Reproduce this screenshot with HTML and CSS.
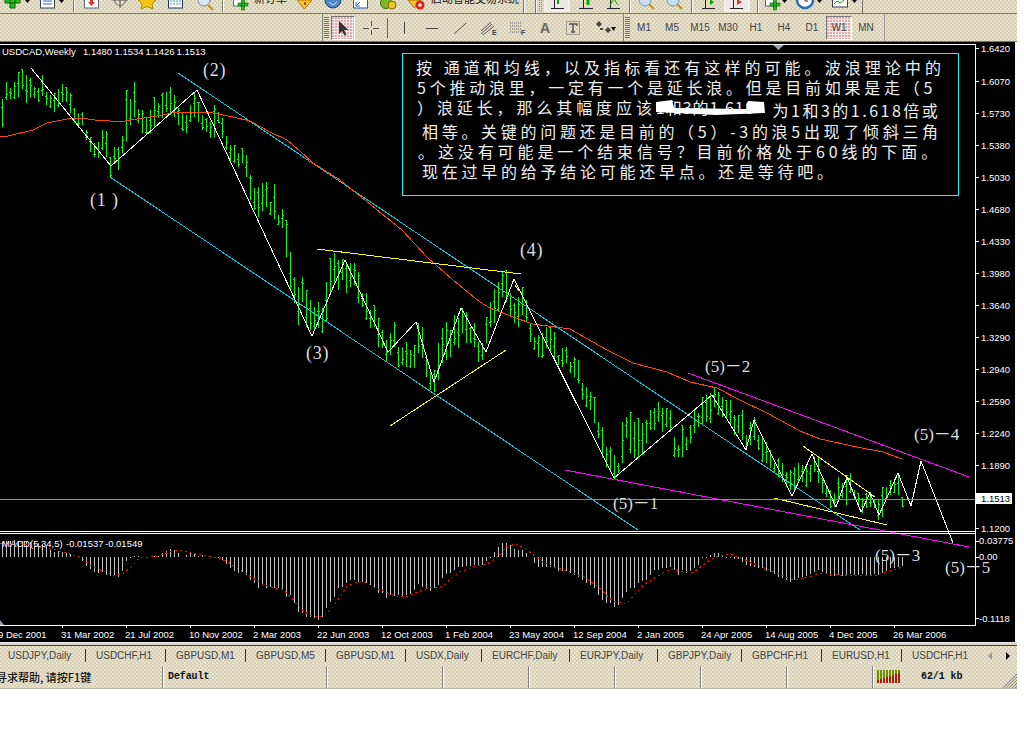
FILE: index.html
```html
<!DOCTYPE html>
<html lang="zh">
<head>
<meta charset="utf-8">
<title>USDCAD,Weekly</title>
<link rel="stylesheet" href="styles.css">
</head>
<body>
<div class="app">
  <div class="strip-top">
    <svg class="strip-svg" width="1017" height="13" viewBox="0 0 1017 13">
      <path d="M5 -1h15v4H5zM10 -6h5v14h-5z" fill="#22c022" stroke="#0a5a0a"/>
      <path d="M25 0h5l-2.500 3z" fill="#000"/>
      <rect x="40.500" y="-4" width="14" height="12" fill="#fff" stroke="#345"/><path d="M43 1h9M43 4h9" stroke="#36c"/>
      <path d="M59 0h5l-2.500 3z" fill="#000"/>
      <path d="M73.500 0v12" stroke="#777"/><path d="M74.500 0v12" stroke="#fff"/>
      <rect x="84.500" y="-4" width="14" height="12" fill="#fff" stroke="#567"/><path d="M90 0h3v2h2l-3.500 4L88 2h2z" fill="#d33"/>
      <circle cx="120" cy="0" r="5.500" fill="none" stroke="#666"/><path d="M112 0h16M120 -2v10" stroke="#555"/>
      <path d="M147 -6l3 5 6 1-4 4 1 5-6-2.500-6 2.500 1-5-4-4 6-1z" fill="#f5c518" stroke="#a80"/>
      <rect x="168.500" y="-4" width="14" height="12" fill="#fff" stroke="#236"/><path d="M170 1h11M170 4h11" stroke="#39c" stroke-dasharray="2 1"/>
      <circle cx="204" cy="0" r="6" fill="#d8e8f4" stroke="#789"/><path d="M208 5l5 5" stroke="#c09020" stroke-width="2"/>
      <path d="M222.500 0v12" stroke="#777"/><path d="M223.500 0v12" stroke="#fff"/>
      <rect x="233.500" y="-4" width="10" height="10" fill="#fff" stroke="#567"/><path d="M238 3h10v3h-10zM241.500 -1h3v11h-3z" fill="#22c022" stroke="#0a5a0a" stroke-width=".6"/>
      <text class="tb-label" x="254" y="3">新订单</text>
      <path d="M297 0h15l-7.500 9z" fill="#fcc633" stroke="#a70"/><path d="M304 2h2v3h-2z" fill="#a50"/>
      <circle cx="333" cy="0" r="8" fill="#4a86c8" stroke="#246"/><path d="M329 2l4 3 4-3" stroke="#cde" fill="none"/>
      <rect x="353.500" y="-4" width="14" height="12" fill="#fff" stroke="#35a"/><path d="M356 6l4-4M360 6h-4V2M363 -1l2 -1" stroke="#27c" fill="none"/>
      <circle cx="386" cy="3" r="5.500" fill="#7ab82a" stroke="#3b6a10"/><circle cx="392" cy="5" r="4" fill="#e8c820" stroke="#860"/>
      <path d="M408 0h13l-6.500 8z" fill="#f4c430" stroke="#a70"/><circle cx="420" cy="5" r="4.500" fill="#e02020"/><circle cx="420" cy="5" r="1.800" fill="#fff"/>
      <text class="tb-label" x="431" y="3">启动智能交易系统</text>
      <path d="M523.500 0v13M535.500 0v13" stroke="#777"/><path d="M524.500 0v13M536.500 0v13" stroke="#fff"/>
      <path d="M539.500 0v12M541.500 0v12" stroke="#888" stroke-dasharray="1 1"/>
      <rect x="545" y="-2" width="24" height="13" fill="#eee8e4" stroke="#fff"/>
      <path d="M551 8.500h13M554.500 -2v11" stroke="#222"/><path d="M558 -2v6" stroke="#0a0" stroke-width="2"/>
      <path d="M579 8.500h14M583.500 -2v11" stroke="#222"/><path d="M588 -1v6" stroke="#0a0" stroke-width="3"/>
      <path d="M607 8.500h13M610.500 -2v11" stroke="#222"/><path d="M610 5l4-6 4 6" stroke="#0a0" fill="none"/>
      <path d="M629.500 0v13" stroke="#777"/><path d="M630.500 0v13" stroke="#fff"/>
      <circle cx="645" cy="0" r="6" fill="#c8def0" stroke="#69c"/><path d="M649 4l5 5" stroke="#c09020" stroke-width="2"/>
      <circle cx="673" cy="0" r="6" fill="#c8def0" stroke="#69c"/><path d="M677 4l5 5" stroke="#c09020" stroke-width="2"/>
      <path d="M691.500 0v13" stroke="#777"/><path d="M692.500 0v13" stroke="#fff"/>
      <path d="M702 8.500h13M705.500 -2v11" stroke="#222"/><path d="M710 -1l4 3-4 3z" fill="#0a0"/>
      <rect x="725" y="-2" width="24" height="13" fill="#eee8e4" stroke="#fff"/>
      <path d="M730 8.500h13M733.500 -2v11" stroke="#222"/><path d="M737 -1l5 3-5 3z" fill="#d33"/>
      <path d="M757.500 0v13" stroke="#777"/><path d="M758.500 0v13" stroke="#fff"/>
      <rect x="765.500" y="-4" width="10" height="10" fill="#fff" stroke="#567"/><path d="M770 3h10v3h-10zM773.500 -1h3v11h-3z" fill="#22c022" stroke="#0a5a0a" stroke-width=".6"/>
      <path d="M782 0h5l-2.500 3z" fill="#000"/>
      <circle cx="805" cy="0" r="8" fill="#fff" stroke="#2b6cb0" stroke-width="2.500"/><path d="M805 -3v4h3" stroke="#333" fill="none"/>
      <path d="M817 0h5l-2.500 3z" fill="#000"/>
      <rect x="832.500" y="-4" width="15" height="11" fill="#fff" stroke="#345"/><path d="M834 4l3-3 3 2 4-3" stroke="#0a0" fill="none"/>
      <path d="M852 0h5l-2.500 3z" fill="#000"/>
      <path d="M862.500 0v13" stroke="#777"/>
    </svg>
  </div>
  <div class="toolbar">
    <div class="tb-spacer"></div>
    <div class="tb-group">
      <span class="grip"></span>
      <span class="btn active w24">
        <svg width="16" height="16" viewBox="0 0 16 16"><path d="M4 1v13l3-3 2.500 4.500 2-1L9 10h4.500z" fill="#333"/></svg>
      </span>
      <span class="btn w32">
        <svg width="16" height="16" viewBox="0 0 16 16"><path d="M0 8.500h6M10 8.500h6M8.500 1v5M8.500 10v5" stroke="#555"/></svg>
      </span>
      <span class="tb-sep"></span>
      <span class="btn w28"><svg width="16" height="16" viewBox="0 0 16 16"><path d="M8.500 2v12" stroke="#444"/></svg></span>
      <span class="btn w28"><svg width="16" height="16" viewBox="0 0 16 16"><path d="M2 8.500h12" stroke="#444"/></svg></span>
      <span class="btn w28"><svg width="16" height="16" viewBox="0 0 16 16"><path d="M2 14L14 3" stroke="#555"/></svg></span>
      <span class="btn w30"><svg width="18" height="16" viewBox="0 0 18 16"><path d="M1 11L11 2M1 14L12 4M3 15L14 6" stroke="#555"/><text class="ico-letter" x="12" y="15">E</text></svg></span>
      <span class="btn w28"><svg width="18" height="16" viewBox="0 0 18 16"><path d="M1 3h11M1 6h11M1 9h11M1 12h11" stroke="#666" stroke-dasharray="1 1"/><text class="ico-letter" x="12" y="15">F</text></svg></span>
      <span class="btn w26 btn-text big">A</span>
      <span class="btn w30"><svg width="14" height="16" viewBox="0 0 14 16"><rect x=".5" y="1.500" width="13" height="13" fill="none" stroke="#666" stroke-dasharray="1 1"/><path d="M3 4h8v2M7 4v8M5 12h4" stroke="#555" stroke-width="1.500" fill="none"/></svg></span>
      <span class="btn w34"><svg width="22" height="16" viewBox="0 0 22 16"><path d="M2 4l3-3 3 3-3 3zM6 8h3v2H6zM11 10l3-3 3 3-3 3z" fill="#444"/><path d="M17 7h5l-2.500 4z" fill="#111"/></svg></span>
    </div>
    <div class="tb-group tb-tf">
      <span class="grip"></span>
      <span class="btn w28 btn-text">M1</span>
      <span class="btn w28 btn-text">M5</span>
      <span class="btn w28 btn-text">M15</span>
      <span class="btn w28 btn-text">M30</span>
      <span class="btn w28 btn-text">H1</span>
      <span class="btn w28 btn-text">H4</span>
      <span class="btn w28 btn-text">D1</span>
      <span class="btn active w26 btn-text">W1</span>
      <span class="btn w28 btn-text">MN</span>
    </div>
  </div>
  <div class="tb-edge"></div>

  <div class="chart">
    <svg class="plot" width="1015" height="600" viewBox="0 42 1015 600">
      <path id="bars" class="l bars" d=""/>
      <!-- channel -->
      <path class="l cyan" d="M178 73L860 530M110 177L638 530"/>
      <!-- moving average -->
      <path class="l orange" d="M0 136L8 136 33 130 47 123 72 118 88 119 95 120 110 121 125 121 137 119 157 116 177 112 213 113 233 117 250 121 270 132 287 140 300 151 313 163 340 180 402 230 428 258 453 280 480 302 490 308 513 317 533 324 570 329 593 342 607 350 633 363 667 372 690 382 717 388 740 400 767 413 800 431 820 439 857 447 883 452 902 459"/>
      <!-- trend lines -->
      <path class="l yellow" d="M317 249L521 274M390 426L506 350M803 446L875 497M774 498L887 525M515 285L519 291"/>
      <path class="l magenta" d="M688 373L969 477M565 470L969 547"/>
      <!-- wave count -->
      <path class="l white" d="M31 68L111 166 197 90 312 336 345 260 388 352 416 322 434 382 461 308 486 352 514 279 614 478 712 395 746 450 754 420 792 496 812 454 836 507 847 477 861 512 870 493 879 515 898 473 911 506 921 461 953 543"/>
      <!-- price line and frame -->
      <path class="l grey" d="M0 499.500H975"/>
      <path class="l frame" d="M0 44.500H975.500V625.500H0M0 531.500H975M0 533.500H975"/>
      <path class="l frame" d="M976 48.500h3M976 81.500h3M976 113.500h3M976 145.500h3M976 177.500h3M976 209.500h3M976 241.500h3M976 273.500h3M976 305.500h3M976 337.500h3M976 369.500h3M976 401.500h3M976 433.500h3M976 465.500h3M976 528.500h3M976 541.500h3M976 557.500h3M976 618.500h3"/>
      <path class="l frame" d="M62.500 625v3M126.500 625v3M190.500 625v3M254.500 625v3M318.500 625v3M382.500 625v3M446.500 625v3M510.500 625v3M574.500 625v3M638.500 625v3M702.500 625v3M766.500 625v3M830.500 625v3M894.500 625v3"/>
      <path d="M773 45h11l-5.500 5z" fill="#9aa0b8"/>
      <path d="M0 620l4 5H0z" fill="#9aa0b8"/>

      <!-- MACD -->
      <path id="hist" class="l hist" d=""/>
      <path id="signal" class="l signal" d=""/>

      <!-- header text -->
      <text class="t" x="2" y="55">USDCAD,Weekly</text>
      <text class="t" x="83" y="55">1.1480</text>
      <text class="t" x="114.500" y="55">1.1534</text>
      <text class="t" x="145.500" y="55">1.1426</text>
      <text class="t" x="176.500" y="55">1.1513</text>
      <text class="t" x="2" y="547">MACD(5,34,5)</text>
      <text class="t" x="66" y="547">-0.01537</text>
      <text class="t" x="105" y="547">-0.01549</text>

      <!-- price axis -->
      <text class="t" x="981" y="52">1.6420</text>
      <text class="t" x="981" y="85">1.6070</text>
      <text class="t" x="981" y="117">1.5730</text>
      <text class="t" x="981" y="149">1.5380</text>
      <text class="t" x="981" y="181">1.5030</text>
      <text class="t" x="981" y="213">1.4680</text>
      <text class="t" x="981" y="245">1.4330</text>
      <text class="t" x="981" y="277">1.3980</text>
      <text class="t" x="981" y="309">1.3640</text>
      <text class="t" x="981" y="341">1.3290</text>
      <text class="t" x="981" y="373">1.2940</text>
      <text class="t" x="981" y="405">1.2590</text>
      <text class="t" x="981" y="437">1.2240</text>
      <text class="t" x="981" y="469">1.1890</text>
      <rect x="976" y="493" width="36" height="11" fill="#fff"/>
      <text class="t dark" x="981" y="502">1.1513</text>
      <text class="t" x="981" y="532">1.1200</text>
      <text class="t" x="979" y="544">0.03775</text>
      <text class="t" x="979" y="560">0.00</text>
      <text class="t" x="979" y="622">-0.1118</text>

      <!-- date axis -->
      <text class="t" x="-2" y="638">9 Dec 2001</text>
      <text class="t" x="61" y="638">31 Mar 2002</text>
      <text class="t" x="125" y="638">21 Jul 2002</text>
      <text class="t" x="189" y="638">10 Nov 2002</text>
      <text class="t" x="253" y="638">2 Mar 2003</text>
      <text class="t" x="317" y="638">22 Jun 2003</text>
      <text class="t" x="381" y="638">12 Oct 2003</text>
      <text class="t" x="445" y="638">1 Feb 2004</text>
      <text class="t" x="509" y="638">23 May 2004</text>
      <text class="t" x="573" y="638">12 Sep 2004</text>
      <text class="t" x="637" y="638">2 Jan 2005</text>
      <text class="t" x="701" y="638">24 Apr 2005</text>
      <text class="t" x="765" y="638">14 Aug 2005</text>
      <text class="t" x="829" y="638">4 Dec 2005</text>
      <text class="t" x="893" y="638">26 Mar 2006</text>

      <!-- wave labels -->
      <text class="w w1" x="90" y="206">(1 )</text>
      <text class="w w1" x="203" y="76">(2)</text>
      <text class="w w1" x="306" y="359">(3)</text>
      <text class="w w1" x="520" y="256">(4)</text>
      <text class="w" x="613" y="509">(5)－1</text>
      <text class="w" x="705" y="372">(5)－2</text>
      <text class="w" x="875" y="561">(5)－3</text>
      <text class="w" x="914" y="440">(5)－4</text>
      <text class="w" x="945" y="573">(5)－5</text>
    </svg>

    <div class="note">
      <p class="n1">按 通道和均线，以及指标看还有这样的可能。波浪理论中的</p>
      <p class="n2">5个推动浪里，一定有一个是延长浪。但是目前如果是走（5</p>
      <p class="n3">）浪延长，那么其幅度应该<span class="n3a">1和3的1.618</span><span class="n3b">为1和3的1.618倍或</span></p>
      <p class="n4">相等。关键的问题还是目前的（5）-3的浪5出现了倾斜三角</p>
      <p class="n5">。这没有可能是一个结束信号？目前价格处于60线的下面。</p>
      <p class="n6">现在过早的给予结论可能还早点。还是等待吧。</p>
      <span class="blob"></span>
    </div>
  </div>

  <div class="band"></div>

  <div class="tabs">
    <span class="tab tw86 first">USDJPY,Daily</span>
    <span class="tab tw80">USDCHF,H1</span>
    <span class="tab tw80">GBPUSD,M1</span>
    <span class="tab tw80">GBPUSD,M5</span>
    <span class="tab tw80">GBPUSD,M1</span>
    <span class="tab tw76">USDX,Daily</span>
    <span class="tab tw88">EURCHF,Daily</span>
    <span class="tab tw88">EURJPY,Daily</span>
    <span class="tab tw84">GBPJPY,Daily</span>
    <span class="tab tw80">GBPCHF,H1</span>
    <span class="tab tw80">EURUSD,H1</span>
    <span class="tab tw80 last">USDCHF,H1</span>
    <span class="tab-arrows">
      <svg width="24" height="10" viewBox="0 0 24 10"><path d="M5 1v8L1 5z" fill="#999"/><path d="M19 1v8l4-4z" fill="#000"/></svg>
    </span>
  </div>

  <div class="status">
    <span class="cell c-help"><span class="help-text">寻求帮助, 请按F1键</span></span>
    <span class="cell c-profile">Default</span>
    <span class="cell c-a"></span>
    <span class="cell c-b"></span>
    <span class="cell c-b"></span>
    <span class="cell c-b"></span>
    <span class="cell c-b"></span>
    <span class="cell c-b"></span>
    <span class="cell c-net">
      <svg width="24" height="13" viewBox="0 0 24 13">
        <path d="M1 0v13M4 0v13M7 0v13M10 0v13M13 0v13M16 0v13M19 0v13M22 0v13" stroke="#6f9100" stroke-width="2"/>
        <path d="M1 13v-3M4 13v-4M7 13v-5M10 13v-6M13 13v-7M16 13v-8M19 13v-9M22 13v-10" stroke="#a8200c" stroke-width="2"/>
      </svg>
      <span class="kb">62/1 kb</span>
    </span>
    <span class="resize">
      <svg width="15" height="15" viewBox="0 0 15 15"><path d="M1 15L15 1M4 15L15 4M7 15L15 7M10 15l5-5M13 15l2-2" stroke="#808080"/></svg>
    </span>
  </div>
</div>
<script src="chart.js"></script>
</body>
</html>
```
FILE: styles.css
```css
* { box-sizing: border-box; }
html, body { margin: 0; padding: 0; background: #fff; }
body { font-family: "Liberation Sans", Arial, sans-serif; }

.app { width: 1017px; display: flex; flex-direction: column; }

.strip-top, .toolbar, .tabs, .status {
  background-color: #d6ccc6;
  background-image:
    radial-gradient(circle at 1px 1px, #ece8b8 .75px, transparent .9px),
    radial-gradient(circle at 3px 3px, #e6e2c4 .75px, transparent .9px);
  background-size: 4px 4px;
}

.strip-top { height: 14px; border-bottom: 1px solid #777; overflow: hidden; }
.strip-svg { display: block; }
.tb-label { font: 11px "Noto Sans CJK SC", sans-serif; fill: #222; }

.toolbar { height: 27px; display: flex; align-items: stretch; }
.tb-spacer { width: 322px; }
.tb-group { display: flex; align-items: center; width: 301px; border-left: 1px solid #808080; padding-left: 1px; }
.tb-tf { width: 262px; border-right: 1px solid #a0a0a0; }
.grip { width: 5px; height: 22px; margin-right: 2px; background: repeating-linear-gradient(#777 0 1px, transparent 1px 2px); }
.tb-tf .grip { margin-right: 0; }
.tb-sep { width: 1px; height: 20px; background: #666; margin-right: 2px; }
.btn { height: 24px; display: flex; align-items: center; justify-content: center; flex: none; }
.w24 { width: 24px; } .w26 { width: 26px; } .w28 { width: 28px; }
.w30 { width: 30px; } .w32 { width: 32px; } .w34 { width: 34px; }
.active {
  background-color: #efe9e6;
  background-image: radial-gradient(circle at 1px 1px, #e0a8a8 .7px, transparent .9px);
  background-size: 3px 3px;
  border: 1px solid #fff;
  border-top-color: #777;
  border-left-color: #777;
}
.btn-text { font-size: 10px; color: #444; }
.big { font-size: 14px; font-weight: 700; color: #666; }
.ico-letter { font: 700 7px "Liberation Sans", sans-serif; fill: #444; }
.tb-edge { height: 1px; background: #777; }

.chart { position: relative; height: 600px; background: #000; border-right: 2px solid #fff; }
.plot { display: block; overflow: hidden; }
.l { fill: none; shape-rendering: crispEdges; }
.bars { stroke: #00ff00; }
.cyan { stroke: #00c8dc; }
.orange { stroke: #ff4500; }
.yellow { stroke: #ffff00; }
.magenta { stroke: #ff00ff; }
.white { stroke: #fff; }
.grey { stroke: #8c8c8c; }
.frame { stroke: #fff; }
.hist { stroke: #c0c0c0; }
.signal { stroke: #ff0000; stroke-dasharray: 2 3; }
.t { font: 9.500px "Liberation Sans", Arial, sans-serif; fill: #fff; }
.t.dark { fill: #000; }
.w { font: 17px "Liberation Serif", "Noto Sans CJK SC", serif; fill: #ddd; }
.w1 { font-size: 18px; letter-spacing: .8px; }

.note {
  position: absolute;
  left: 402px;
  top: 11px;
  width: 557px;
  height: 143px;
  border: 1px solid #00ffff;
  background: #000;
  color: #eee;
  font: 16px/20px "Noto Sans CJK SC", sans-serif;
  letter-spacing: 3.900px;
  white-space: nowrap;
}
.note p { margin: 0; }
.n1 { padding: 3px 0 0 13px; letter-spacing: 4.050px; }
.n2 { padding-left: 14px; letter-spacing: 3.750px; }
.n3 { padding-left: 14px; }
.n3a { letter-spacing: 1px; }
.n3b { margin-left: 18px; position: relative; top: 3px; letter-spacing: 2.500px; }
.n4 { padding: 4px 0 0 19px; letter-spacing: 3.700px; }
.n5 { padding-left: 15px; }
.n6 { padding-left: 19px; letter-spacing: 3.750px; }
.blob {
  position: absolute;
  left: 253px;
  top: 46px;
  width: 109px;
  height: 15px;
  background: #fff;
  clip-path: polygon(0 2px, 16px 0, 18px 8px, 90px 9px, 92px 1px, 108px 2px, 109px 13px, 60px 15px, 0 12px);
}

.band { height: 4px; background: #d6d2cc; border-top: 1px solid #e8e8e8; border-bottom: 1px solid #444; }

.tabs { height: 19px; display: flex; align-items: center; font-size: 10px; color: #444; white-space: nowrap; }
.tab { padding-left: 10px; height: 13px; line-height: 13px; border-right: 1px solid #333; flex: none; }
.tab.first { padding-left: 8px; }
.tab.last { border-right: 0; }
.tw76 { width: 76px; } .tw80 { width: 80px; } .tw84 { width: 84px; } .tw86 { width: 86px; } .tw88 { width: 88px; }
.tab-arrows { margin-left: auto; margin-right: 6px; display: flex; }

.status { height: 24px; display: flex; align-items: center; font: 700 10px "Liberation Mono", monospace; color: #111; overflow: hidden; border-bottom: 1px solid #b8b8ae; }
.cell { height: 22px; display: flex; align-items: center; flex: none; border-left: 1px solid #808080; box-shadow: inset 1px 0 0 #fff; padding-left: 5px; }
.c-help { width: 162px; border-left: 0; box-shadow: none; padding-left: 0; overflow: hidden; }
.help-text { font: 500 11px "Noto Sans CJK SC", sans-serif; margin-left: -4px; white-space: nowrap; }
.c-profile { width: 164px; letter-spacing: -.1px; }
.c-a { width: 116px; }
.c-b { width: 86px; }
.c-net { width: 130px; padding-left: 4px; gap: 20px; }
.kb { letter-spacing: -.1px; }
.resize { margin-left: auto; align-self: flex-end; display: flex; }
```
FILE: chart.js
```js
(function () {
  var A = [118,200,65,120,85,118,65,118,35,110,28,88,45,130,55,115,80,115,85,125,45,108,95,135,105,145,100,155,88,140,72,125,82,125,100,160,145,190,158,205,155,195,210,240,230,275,250,290,245,295,210,270,212,290,290,350,262,312,262,330,228,280,90,245,118,195,67,170,148,190,150,218,170,222,150,218,112,200,128,175,100,175,95,155,80,165,105,170,145,195,155,212,165,220,135,185,95,170,125,185,165,210,175,215,185,235,135,232,155,190,175,235,228,270,255,310,255,310,280,320,265,310,285,350,345,420,385,450,380,470,370,452,365,440,425,465,372,478,465,495,448,505,480,590,575,690];
  var B = [140,220,170,285,140,215,180,290,210,300,230,300,215,295,235,310,155,275,85,190,68,160,90,180,88,150,100,190,100,170,100,165,125,220,190,230,190,270,240,295,225,290,265,350,300,355,330,395,310,375,275,350,350,410,350,405,335,410,360,415,345,415,280,370,292,385,375,440,420,480,420,485,340,450,295,400,275,390,300,380,255,345,265,355,235,310,245,340,290,340,280,350,335,395,340,390,260,340,215,290,178,280,155,245,125,200,120,215,190,260,220,280,200,290,170,255,210,275,280,335,320,360,315,380,310,385,290,355,290,370,305,385,375,405,355,410,350,400,395,430,380,440,390,460,460,510,470,530,485,540,500,580,575,625,590,680,650,710,650,720];
  var C = [315,390,340,370,215,340,200,265,185,310,215,325,205,320,220,315,210,280,180,240,175,240,155,215,175,245,175,230,180,245,260,320,285,320,225,320,260,300,225,280,180,250,190,230,140,225,135,215,130,220,115,170,125,195,140,200,150,205,150,225,195,255,195,250,180,270,255,300,215,285,200,270,255,300,265,335,275,340,300,355,340,370,325,380,340,395,365,410,360,420,350,420,340,400,345,395,350,410,345,395,320,365,320,400,380,430,405,440,420,475,430,470,380,450,400,445,375,465,370,430,420,450,430,470,445,490,430,475,425,470,450,475,450,510,410,500,410,450,390,435,390,430,370,435,440,470];

  var d = [];
  function bars(arr, x0, yBase) {
    for (var i = 0; i < arr.length / 2; i++) {
      var x = x0 + 4 * i;
      var hi = Math.round(yBase + arr[2 * i] / 3);
      var lo = Math.round(yBase + arr[2 * i + 1] / 3);
      var span = lo - hi;
      var open = hi + Math.round(span * (((x * 7) % 11) / 11));
      var close = hi + Math.round(span * (((x * 13) % 9) / 9));
      d.push('M' + (x + 0.5) + ' ' + hi + 'V' + lo);
      d.push('M' + (x - 1) + ' ' + (open + 0.5) + 'h1');
      d.push('M' + (x + 1) + ' ' + (close + 0.5) + 'h1');
    }
  }
  bars(A, 2, 60);
  bars(B, 294, 230);
  bars(C, 614, 350);
  document.getElementById('bars').setAttribute('d', d.join(''));

  /* MACD histogram: bar tops or bottoms, read every 4px */
  var H1 = [50,47,47,46,48,48,50,52,55,55,58,62,75,80,78,80,85,88,95,97,108,122,132,140,145,142,150,152,152,155,138,108,100,92,92,97,97,97,92,92,85,78,72,75,85,95,90,85,88,92,90,95,95,97,100,105,118,130,138,145,140,150,165,175,190,180,190,185,190,190,195,215,210,235,260,265,275,275,280,285,275,250,230,215,190,185,175,165,165,170,172,175,180,190,205,205,218,210,212,210];
  var H2 = [185,180,178,165,148,155,163,168,160,150,130,118,113,105,96,96,92,92,90,90,90,78,68,50,36,25,25,30,43,45,45,55,67,83,96,96,96,96,100,108,108,108,115,120,125,135,143,150,158,180,195,205,205,215,210,190,170,158,160,145,138,135,120,105,105,100,100,95,105,120,105,115,108,100,90,70,70,60,55,55,60,68,68,72,72,80,90,92,95,100,100,108,112,118,125,128,135,140,135,130,125,122,118,110,105,112,118,122,122,120,122,120,118,120,120,118,120,120,118,120,115,108,100,100,95,92];
  var h = [], i, y;
  for (i = 0; i < H1.length; i++) {
    y = Math.round(525 + H1[i] / 3);
    h.push('M' + (2.5 + 4 * i) + ' 557V' + y);
  }
  for (i = 0; i < H2.length; i++) {
    y = Math.round(535 + H2[i] / 3);
    h.push('M' + (402.5 + 4 * i) + ' 557V' + y);
  }
  document.getElementById('hist').setAttribute('d', h.join(''));

  /* MACD signal line */
  var S1 = [0,55,25,60,50,55,100,60,150,70,200,85,240,95,270,120,300,135,345,152,370,145,395,125,420,97,470,95,510,80,540,75,575,85,630,95,660,100,690,115,720,135,760,160,790,180,850,195,880,225,900,250,930,272,970,275,1000,245,1040,185,1070,172,1090,170,1140,195,1180,210];
  var S2 = [0,185,20,185,55,170,90,158,125,155,180,110,230,92,260,88,300,60,320,35,345,28,375,40,410,68,450,92,500,108,550,125,600,160,640,200,680,205,730,150,770,125,810,103,850,110,880,112,930,75,960,62,990,57,1030,72,1070,90,1120,110,1180,135,1230,125,1260,115,1320,120,1430,120,1470,108,1505,97];
  var p = [];
  for (i = 0; i < S1.length; i += 2) p.push((S1[i] / 3).toFixed(1) + ' ' + (525 + S1[i + 1] / 3).toFixed(1));
  for (i = 0; i < S2.length; i += 2) p.push((400 + S2[i] / 3).toFixed(1) + ' ' + (535 + S2[i + 1] / 3).toFixed(1));
  document.getElementById('signal').setAttribute('d', 'M' + p.join('L'));
})();
```
